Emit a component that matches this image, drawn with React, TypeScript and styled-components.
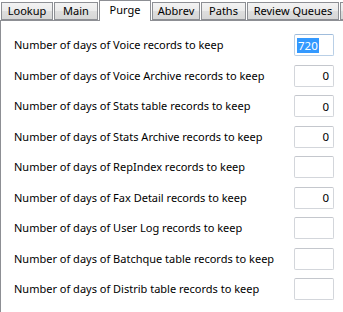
import React from 'react'
import styled, { createGlobalStyle } from 'styled-components'

const GlobalStyle = createGlobalStyle`
  html, body {
    margin: 0;
    padding: 0;
    background: #ffffff;
  }
  body {
    font-family: 'Noto Sans', 'Open Sans', 'DejaVu Sans', sans-serif;
    font-size: 11px;
    color: #000000;
  }
`

const Window = styled.div`
  width: 343px;
  height: 312px;
  overflow: hidden;
  background: #ffffff;
`

const TabStrip = styled.div`
  display: flex;
  align-items: flex-end;
  gap: 1px;
  height: 20px;
  padding-left: 1px;
  position: relative;
  z-index: 1;
`

const Tab = styled.div<{ $w: number; $active?: boolean }>`
  box-sizing: border-box;
  flex: 0 0 ${(p) => p.$w}px;
  height: ${(p) => (p.$active ? 21 : 18)}px;
  margin-bottom: ${(p) => (p.$active ? -1 : 0)}px;
  border: 1px solid #8d8f94;
  border-bottom: ${(p) => (p.$active ? 'none' : '1px solid #8d8f94')};
  background: ${(p) =>
    p.$active
      ? '#ffffff'
      : 'linear-gradient(to bottom, #f3f3f3 0%, #ebebeb 50%, #dedede 51%, #d6d6d6 100%)'};
  display: flex;
  align-items: ${(p) => (p.$active ? 'flex-start' : 'center')};
  justify-content: center;
  padding-top: ${(p) => (p.$active ? 2 : 0)}px;
  white-space: nowrap;
  font-size: 11px;
  line-height: 14px;
`

const Panel = styled.div`
  border-top: 1px solid #8d8f94;
  border-left: 1px solid #8d8f94;
  padding: 13px 9px 0 13px;
  display: flex;
  flex-direction: column;
  gap: 8.5px;
  height: 300px;
  box-sizing: border-box;
`

const Row = styled.div`
  display: flex;
  align-items: center;
  height: 22px;
`

const Label = styled.span`
  flex: 1;
  white-space: nowrap;
  line-height: 14px;
`

const Field = styled.div<{ $focused?: boolean }>`
  box-sizing: border-box;
  width: 40px;
  height: 22px;
  border: 1px solid ${(p) => (p.$focused ? '#b9cfe6' : '#d3d6db')};
  border-top-color: ${(p) => (p.$focused ? '#9fbcdc' : '#c4c7cd')};
  border-radius: 2px;
  background: #ffffff;
  display: flex;
  align-items: center;
  justify-content: ${(p) => (p.$focused ? 'flex-start' : 'flex-end')};
  padding: 0 4px 0 2px;
  font-size: 11.5px;
`

const Selected = styled.span`
  background: #3399ff;
  color: #ffffff;
  line-height: 15px;
  padding: 0 1px;
`

const tabs = [
  { name: 'Lookup', w: 52 },
  { name: 'Main', w: 44 },
  { name: 'Purge', w: 52, active: true },
  { name: 'Abbrev', w: 48 },
  { name: 'Paths', w: 45 },
  { name: 'Review Queues', w: 92 },
  { name: '', w: 20 },
]

const rows = [
  { label: 'Voice records', value: '720', focused: true },
  { label: 'Voice Archive records', value: '0' },
  { label: 'Stats table records', value: '0' },
  { label: 'Stats Archive records', value: '0' },
  { label: 'RepIndex records', value: '' },
  { label: 'Fax Detail records', value: '0' },
  { label: 'User Log records', value: '' },
  { label: 'Batchque table records', value: '' },
  { label: 'Distrib table records', value: '' },
]

const App = () => {
  return (
    <Window>
      <GlobalStyle />
      <TabStrip>
        {tabs.map((t, i) => (
          <Tab key={i} $w={t.w} $active={t.active}>
            {t.name}
          </Tab>
        ))}
      </TabStrip>
      <Panel>
        {rows.map((r) => (
          <Row key={r.label}>
            <Label>Number of days of {r.label} to keep</Label>
            <Field $focused={r.focused}>
              {r.focused ? <Selected>{r.value}</Selected> : r.value}
            </Field>
          </Row>
        ))}
      </Panel>
    </Window>
  )
}

export default App
